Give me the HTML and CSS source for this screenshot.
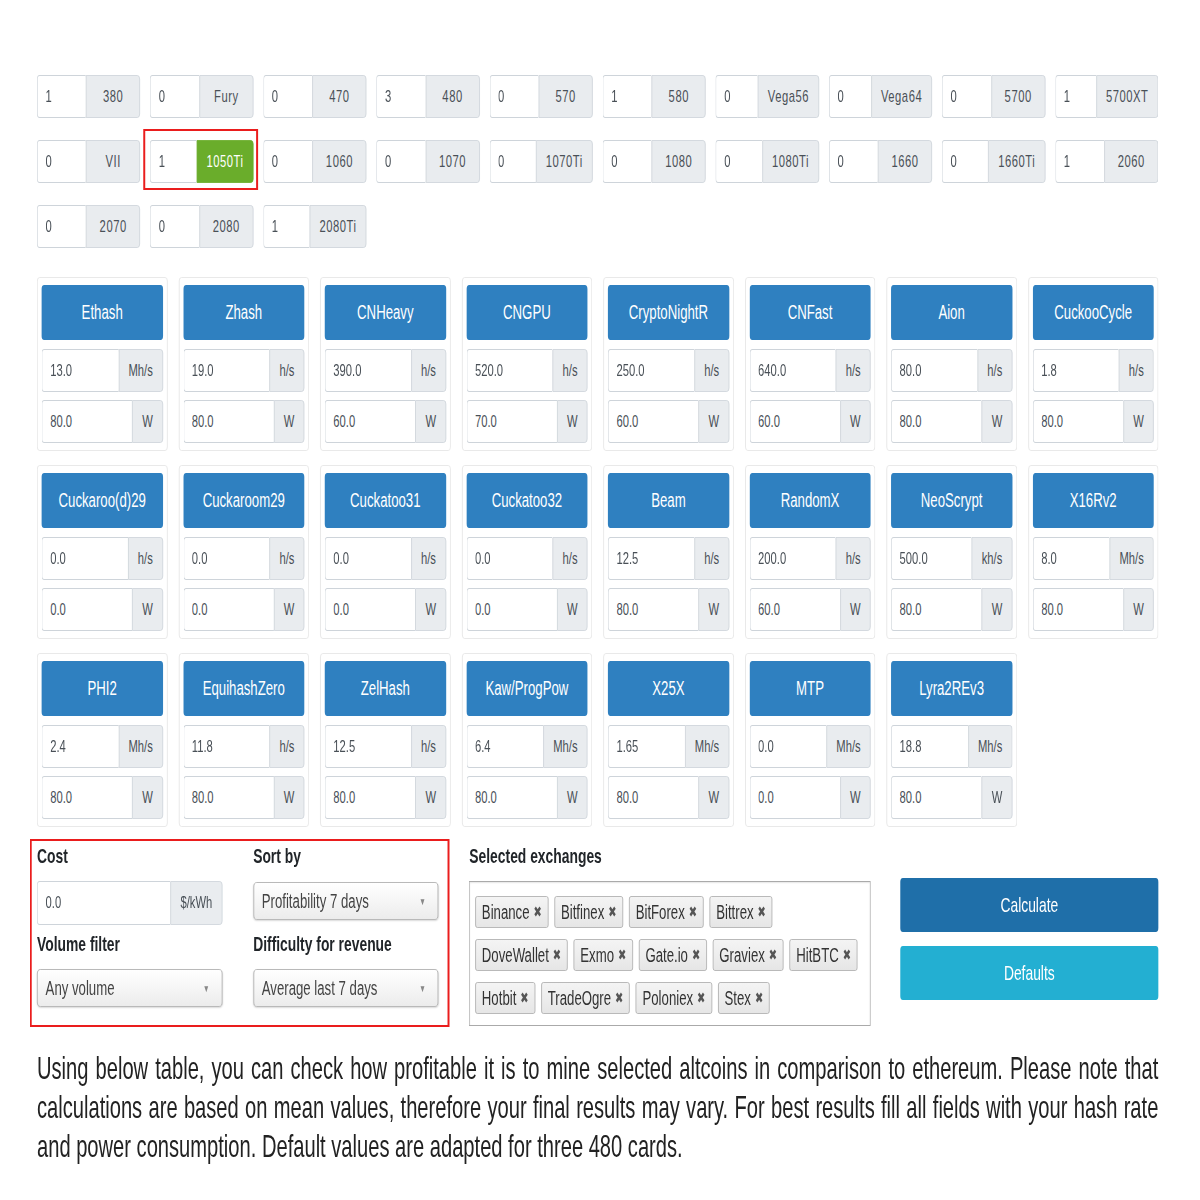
FILE: index.html
```html
<!DOCTYPE html>
<html lang="en">
<head>
    <meta charset="UTF-8">
    <title>Mining calculator</title>
    <link rel="stylesheet" href="styles.css">
</head>
<body>

<div class="frame">
<div class="page">

    <!-- GPU counts -->
    <div class="gpus">
        <label class="gpu"><input class="count" type="text" value="1"><span class="name">380</span></label>
        <label class="gpu"><input class="count" type="text" value="0"><span class="name">Fury</span></label>
        <label class="gpu"><input class="count" type="text" value="0"><span class="name">470</span></label>
        <label class="gpu"><input class="count" type="text" value="3"><span class="name">480</span></label>
        <label class="gpu"><input class="count" type="text" value="0"><span class="name">570</span></label>
        <label class="gpu"><input class="count" type="text" value="1"><span class="name">580</span></label>
        <label class="gpu"><input class="count" type="text" value="0"><span class="name">Vega56</span></label>
        <label class="gpu"><input class="count" type="text" value="0"><span class="name">Vega64</span></label>
        <label class="gpu"><input class="count" type="text" value="0"><span class="name">5700</span></label>
        <label class="gpu"><input class="count" type="text" value="1"><span class="name">5700XT</span></label>

        <label class="gpu"><input class="count" type="text" value="0"><span class="name">VII</span></label>
        <label class="gpu on"><input class="count" type="text" value="1"><span class="name">1050Ti</span></label>
        <label class="gpu"><input class="count" type="text" value="0"><span class="name">1060</span></label>
        <label class="gpu"><input class="count" type="text" value="0"><span class="name">1070</span></label>
        <label class="gpu"><input class="count" type="text" value="0"><span class="name">1070Ti</span></label>
        <label class="gpu"><input class="count" type="text" value="0"><span class="name">1080</span></label>
        <label class="gpu"><input class="count" type="text" value="0"><span class="name">1080Ti</span></label>
        <label class="gpu"><input class="count" type="text" value="0"><span class="name">1660</span></label>
        <label class="gpu"><input class="count" type="text" value="0"><span class="name">1660Ti</span></label>
        <label class="gpu"><input class="count" type="text" value="1"><span class="name">2060</span></label>

        <label class="gpu"><input class="count" type="text" value="0"><span class="name">2070</span></label>
        <label class="gpu"><input class="count" type="text" value="0"><span class="name">2080</span></label>
        <label class="gpu"><input class="count" type="text" value="1"><span class="name">2080Ti</span></label>
    </div>

    <!-- Algorithms: hash rate + power -->
    <div class="algos">
        <div class="algo"><button class="algo-btn">Ethash</button>
            <div class="field"><input type="text" value="13.0"><span class="unit">Mh/s</span></div>
            <div class="field"><input type="text" value="80.0"><span class="unit">W</span></div></div>
        <div class="algo"><button class="algo-btn">Zhash</button>
            <div class="field"><input type="text" value="19.0"><span class="unit">h/s</span></div>
            <div class="field"><input type="text" value="80.0"><span class="unit">W</span></div></div>
        <div class="algo"><button class="algo-btn">CNHeavy</button>
            <div class="field"><input type="text" value="390.0"><span class="unit">h/s</span></div>
            <div class="field"><input type="text" value="60.0"><span class="unit">W</span></div></div>
        <div class="algo"><button class="algo-btn">CNGPU</button>
            <div class="field"><input type="text" value="520.0"><span class="unit">h/s</span></div>
            <div class="field"><input type="text" value="70.0"><span class="unit">W</span></div></div>
        <div class="algo"><button class="algo-btn">CryptoNightR</button>
            <div class="field"><input type="text" value="250.0"><span class="unit">h/s</span></div>
            <div class="field"><input type="text" value="60.0"><span class="unit">W</span></div></div>
        <div class="algo"><button class="algo-btn">CNFast</button>
            <div class="field"><input type="text" value="640.0"><span class="unit">h/s</span></div>
            <div class="field"><input type="text" value="60.0"><span class="unit">W</span></div></div>
        <div class="algo"><button class="algo-btn">Aion</button>
            <div class="field"><input type="text" value="80.0"><span class="unit">h/s</span></div>
            <div class="field"><input type="text" value="80.0"><span class="unit">W</span></div></div>
        <div class="algo"><button class="algo-btn">CuckooCycle</button>
            <div class="field"><input type="text" value="1.8"><span class="unit">h/s</span></div>
            <div class="field"><input type="text" value="80.0"><span class="unit">W</span></div></div>

        <div class="algo"><button class="algo-btn">Cuckaroo(d)29</button>
            <div class="field"><input type="text" value="0.0"><span class="unit">h/s</span></div>
            <div class="field"><input type="text" value="0.0"><span class="unit">W</span></div></div>
        <div class="algo"><button class="algo-btn">Cuckaroom29</button>
            <div class="field"><input type="text" value="0.0"><span class="unit">h/s</span></div>
            <div class="field"><input type="text" value="0.0"><span class="unit">W</span></div></div>
        <div class="algo"><button class="algo-btn">Cuckatoo31</button>
            <div class="field"><input type="text" value="0.0"><span class="unit">h/s</span></div>
            <div class="field"><input type="text" value="0.0"><span class="unit">W</span></div></div>
        <div class="algo"><button class="algo-btn">Cuckatoo32</button>
            <div class="field"><input type="text" value="0.0"><span class="unit">h/s</span></div>
            <div class="field"><input type="text" value="0.0"><span class="unit">W</span></div></div>
        <div class="algo"><button class="algo-btn">Beam</button>
            <div class="field"><input type="text" value="12.5"><span class="unit">h/s</span></div>
            <div class="field"><input type="text" value="80.0"><span class="unit">W</span></div></div>
        <div class="algo"><button class="algo-btn">RandomX</button>
            <div class="field"><input type="text" value="200.0"><span class="unit">h/s</span></div>
            <div class="field"><input type="text" value="60.0"><span class="unit">W</span></div></div>
        <div class="algo"><button class="algo-btn">NeoScrypt</button>
            <div class="field"><input type="text" value="500.0"><span class="unit">kh/s</span></div>
            <div class="field"><input type="text" value="80.0"><span class="unit">W</span></div></div>
        <div class="algo"><button class="algo-btn">X16Rv2</button>
            <div class="field"><input type="text" value="8.0"><span class="unit">Mh/s</span></div>
            <div class="field"><input type="text" value="80.0"><span class="unit">W</span></div></div>

        <div class="algo"><button class="algo-btn">PHI2</button>
            <div class="field"><input type="text" value="2.4"><span class="unit">Mh/s</span></div>
            <div class="field"><input type="text" value="80.0"><span class="unit">W</span></div></div>
        <div class="algo"><button class="algo-btn">EquihashZero</button>
            <div class="field"><input type="text" value="11.8"><span class="unit">h/s</span></div>
            <div class="field"><input type="text" value="80.0"><span class="unit">W</span></div></div>
        <div class="algo"><button class="algo-btn">ZelHash</button>
            <div class="field"><input type="text" value="12.5"><span class="unit">h/s</span></div>
            <div class="field"><input type="text" value="80.0"><span class="unit">W</span></div></div>
        <div class="algo"><button class="algo-btn">Kaw/ProgPow</button>
            <div class="field"><input type="text" value="6.4"><span class="unit">Mh/s</span></div>
            <div class="field"><input type="text" value="80.0"><span class="unit">W</span></div></div>
        <div class="algo"><button class="algo-btn">X25X</button>
            <div class="field"><input type="text" value="1.65"><span class="unit">Mh/s</span></div>
            <div class="field"><input type="text" value="80.0"><span class="unit">W</span></div></div>
        <div class="algo"><button class="algo-btn">MTP</button>
            <div class="field"><input type="text" value="0.0"><span class="unit">Mh/s</span></div>
            <div class="field"><input type="text" value="0.0"><span class="unit">W</span></div></div>
        <div class="algo"><button class="algo-btn">Lyra2REv3</button>
            <div class="field"><input type="text" value="18.8"><span class="unit">Mh/s</span></div>
            <div class="field"><input type="text" value="80.0"><span class="unit">W</span></div></div>
    </div>

    <!-- Settings, exchanges and actions -->
    <div class="bottom">
        <div class="settings">
            <div class="setting">
                <div class="label">Cost</div>
                <div class="field cost"><input type="text" value="0.0"><span class="unit">$/kWh</span></div>
            </div>
            <div class="setting">
                <div class="label">Sort by</div>
                <div class="select">Profitability 7 days<span class="arrow">▼</span></div>
            </div>
            <div class="setting">
                <div class="label">Volume filter</div>
                <div class="select">Any volume<span class="arrow">▼</span></div>
            </div>
            <div class="setting">
                <div class="label">Difficulty for revenue</div>
                <div class="select">Average last 7 days<span class="arrow">▼</span></div>
            </div>
        </div>

        <div class="exchanges">
            <div class="label">Selected exchanges</div>
            <div class="tags">
                <span class="tag">Binance <i>✖</i></span>
                <span class="tag">Bitfinex <i>✖</i></span>
                <span class="tag">BitForex <i>✖</i></span>
                <span class="tag">Bittrex <i>✖</i></span>
                <span class="tag">DoveWallet <i>✖</i></span>
                <span class="tag">Exmo <i>✖</i></span>
                <span class="tag">Gate.io <i>✖</i></span>
                <span class="tag">Graviex <i>✖</i></span>
                <span class="tag">HitBTC <i>✖</i></span>
                <span class="tag">Hotbit <i>✖</i></span>
                <span class="tag">TradeOgre <i>✖</i></span>
                <span class="tag">Poloniex <i>✖</i></span>
                <span class="tag">Stex <i>✖</i></span>
            </div>
        </div>

        <div class="actions">
            <button class="btn btn-calc">Calculate</button>
            <button class="btn btn-defaults">Defaults</button>
        </div>
    </div>

    <p class="intro">
        <span class="line full">Using below table, you can check how profitable it is to mine selected altcoins in comparison to ethereum. Please note that</span>
        <span class="line full">calculations are based on mean values, therefore your final results may vary. For best results fill all fields with your hash rate</span>
        <span class="line">and power consumption. Default values are adapted for three 480 cards.</span>
    </p>

</div>
</div>

</body>
</html>
```

FILE: styles.css
```css
* {
    box-sizing: border-box;
}
body {
    margin: 0;
    background-color: #fff;
    color: #212529;
    font-family: "Liberation Sans", Arial, sans-serif;
}
input, button {
    font: inherit;
}

/* the whole sheet is drawn narrow: 1699px of layout squeezed into 1121px */
.frame {
    width: 1145px;
    margin-left: 27px;
    padding-left: 10px;
    overflow: hidden;
}
.page {
    width: 1699px;
    padding-top: 75px;
    transform: scaleX(0.66);
    transform-origin: 0 0;
}

/* GPU counts */
.gpus {
    display: grid;
    grid-template-columns: repeat(10, minmax(0, 1fr));
    column-gap: 15px;
    row-gap: 22px;
}
.gpu {
    position: relative;
    display: flex;
    height: 43px;
    font-size: 17px;
    color: #495057;
}
.gpu .count {
    flex: 1;
    width: 0;
    min-width: 0;
    padding: 0 12px;
    border: 1px solid #ced4da;
    border-right: 0;
    border-radius: 4px 0 0 4px;
    color: #495057;
    background-color: #fff;
}
.gpu .name {
    display: flex;
    align-items: center;
    justify-content: center;
    min-width: 82px;
    padding: 0 14px;
    background-color: #e9ecef;
    border: 1px solid #ced4da;
    border-radius: 0 4px 4px 0;
    letter-spacing: 0.8px;
    white-space: nowrap;
}
.gpu.on .name {
    background-color: #6aad2b;
    border-color: #6aad2b;
    color: #fff;
}
.gpu.on::after {
    content: "";
    position: absolute;
    top: -11px;
    bottom: -7px;
    left: -10px;
    right: -7px;
    border: 2px solid #ea1d1d;
    border-left-width: 3px;
    border-right-width: 3px;
    pointer-events: none;
}

/* Algorithms */
.algos {
    display: grid;
    grid-template-columns: repeat(8, minmax(0, 1fr));
    column-gap: 17px;
    row-gap: 14px;
    margin-top: 29px;
}
.algo {
    display: flex;
    flex-direction: column;
    gap: 8px;
    padding: 7px 6px 7px;
    border: 1px solid #e4e4e4;
    border-radius: 4px;
}
.algo-btn {
    height: 55px;
    margin-bottom: 1px;
    padding: 0;
    border: 0;
    border-radius: 4px;
    background-color: #2f80c0;
    color: #fff;
    font-size: 20px;
    white-space: nowrap;
}
.field {
    display: flex;
    height: 43px;
    font-size: 17px;
}
.field input {
    flex: 1;
    width: 0;
    min-width: 0;
    padding: 0 12px;
    border: 1px solid #ced4da;
    border-right: 0;
    border-radius: 4px 0 0 4px;
    color: #495057;
    background-color: #fff;
}
.unit {
    display: flex;
    align-items: center;
    padding: 0 14px;
    background-color: #e9ecef;
    border: 1px solid #ced4da;
    border-radius: 0 4px 4px 0;
    color: #495057;
    white-space: nowrap;
}

/* Bottom area */
.bottom {
    display: flex;
    margin-top: 17px;
}
.label {
    height: 24px;
    line-height: 24px;
    font-size: 21px;
    font-weight: bold;
    color: #212529;
    white-space: nowrap;
}
.settings {
    position: relative;
    width: 608px;
    flex: none;
    display: grid;
    grid-template-columns: repeat(2, minmax(0, 1fr));
    column-gap: 47px;
    align-content: start;
}
.settings::after {
    content: "";
    position: absolute;
    top: -5px;
    bottom: -1px;
    left: -11px;
    right: -17px;
    border: 2px solid #ea1d1d;
    border-left-width: 3px;
    border-right-width: 3px;
    pointer-events: none;
}
.setting .field,
.setting .select {
    margin-top: 13px;
}
.setting:nth-child(2) .select {
    margin-top: 14px;
}
.setting:nth-child(n+3) .label {
    margin-top: 7px;
}
.field.cost {
    height: 44px;
}
.select {
    display: flex;
    align-items: center;
    justify-content: space-between;
    height: 38px;
    padding: 0 18px 0 12px;
    border: 1px solid #aaa;
    border-radius: 5px;
    background: linear-gradient(#fff, #ececec);
    box-shadow: 0 1px 2px rgba(0, 0, 0, 0.15);
    font-size: 20px;
    color: #444;
    white-space: nowrap;
}
.select .arrow {
    font-size: 10px;
    color: #888;
}

.exchanges {
    width: 608px;
    flex: none;
    margin-left: 47px;
}
.tags {
    display: flex;
    flex-wrap: wrap;
    align-content: flex-start;
    gap: 11px 9px;
    height: 145px;
    margin-top: 13px;
    padding: 14px 8px;
    border: 1px solid #aaa;
    box-shadow: inset 0 1px 2px rgba(0, 0, 0, 0.1);
}
.tag {
    display: flex;
    align-items: center;
    height: 32px;
    padding: 0 9px;
    border: 1px solid #aaa;
    border-radius: 3px;
    background: linear-gradient(#f4f4f4, #e6e6e6);
    font-size: 20px;
    color: #333;
    white-space: nowrap;
}
.tag i {
    margin-left: 6px;
    font-style: normal;
    font-size: 15px;
    color: #555;
    font-family: "DejaVu Sans", sans-serif;
}

.actions {
    flex: 1;
    margin-left: 45px;
    padding-top: 34px;
}
.btn {
    display: block;
    width: 100%;
    height: 54px;
    border: 0;
    border-radius: 4px;
    color: #fff;
    font-size: 21px;
}
.btn-calc {
    background-color: #1f6fa9;
}
.btn-defaults {
    margin-top: 14px;
    background-color: #23afd2;
}

.intro {
    margin: 23px 0 0;
    font-size: 30.5px;
    line-height: 39px;
    color: #222;
}
.intro .line {
    display: block;
}
.intro .full {
    text-align: justify;
    text-align-last: justify;
}
```
